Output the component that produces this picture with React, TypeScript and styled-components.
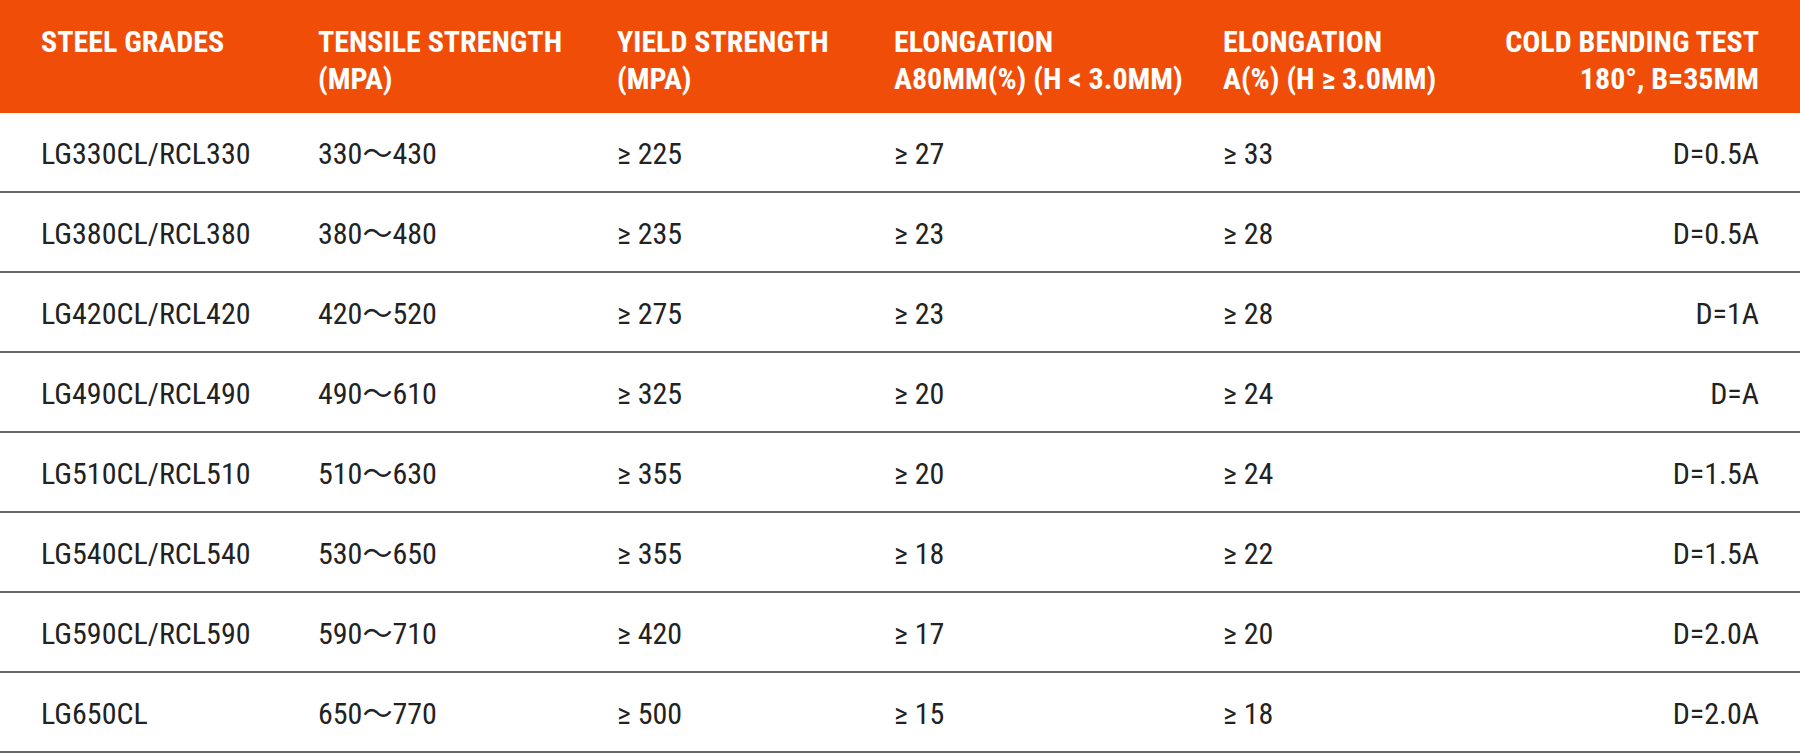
import React from 'react'
import styled, { createGlobalStyle } from 'styled-components'

interface GradeRow {
  grade: string
  tensile: string
  yieldStrength: string
  elongThin: string
  elongThick: string
  bending: string
}

const rows: GradeRow[] = [
  { grade: 'LG330CL/RCL330', tensile: '330～430', yieldStrength: '≥ 225', elongThin: '≥ 27', elongThick: '≥ 33', bending: 'D=0.5A' },
  { grade: 'LG380CL/RCL380', tensile: '380～480', yieldStrength: '≥ 235', elongThin: '≥ 23', elongThick: '≥ 28', bending: 'D=0.5A' },
  { grade: 'LG420CL/RCL420', tensile: '420～520', yieldStrength: '≥ 275', elongThin: '≥ 23', elongThick: '≥ 28', bending: 'D=1A' },
  { grade: 'LG490CL/RCL490', tensile: '490～610', yieldStrength: '≥ 325', elongThin: '≥ 20', elongThick: '≥ 24', bending: 'D=A' },
  { grade: 'LG510CL/RCL510', tensile: '510～630', yieldStrength: '≥ 355', elongThin: '≥ 20', elongThick: '≥ 24', bending: 'D=1.5A' },
  { grade: 'LG540CL/RCL540', tensile: '530～650', yieldStrength: '≥ 355', elongThin: '≥ 18', elongThick: '≥ 22', bending: 'D=1.5A' },
  { grade: 'LG590CL/RCL590', tensile: '590～710', yieldStrength: '≥ 420', elongThin: '≥ 17', elongThick: '≥ 20', bending: 'D=2.0A' },
  { grade: 'LG650CL', tensile: '650～770', yieldStrength: '≥ 500', elongThin: '≥ 15', elongThick: '≥ 18', bending: 'D=2.0A' },
]

const GlobalStyle = createGlobalStyle`
  body {
    margin: 0;
    background: #ffffff;
    font-family: "Roboto Condensed", Roboto, "Noto Sans CJK SC", sans-serif;
    font-stretch: condensed;
  }
`

const App: React.FC = () => {
  return (
    <>
      <GlobalStyle />
      <StyledTable>
        <StyledHead>
          <StyledHeadCell>STEEL GRADES</StyledHeadCell>
          <StyledHeadCell>TENSILE STRENGTH<br />(MPA)</StyledHeadCell>
          <StyledHeadCell>YIELD STRENGTH<br />(MPA)</StyledHeadCell>
          <StyledHeadCell>ELONGATION<br />A80MM(%) (H &lt; 3.0MM)</StyledHeadCell>
          <StyledHeadCell>ELONGATION<br />A(%) (H ≥ 3.0MM)</StyledHeadCell>
          <StyledHeadCell alignRight>COLD BENDING TEST<br />180°, B=35MM</StyledHeadCell>
        </StyledHead>
        {rows.map((row) => (
          <StyledRow key={row.grade}>
            <StyledCell>{row.grade}</StyledCell>
            <StyledCell>{row.tensile}</StyledCell>
            <StyledCell>{row.yieldStrength}</StyledCell>
            <StyledCell>{row.elongThin}</StyledCell>
            <StyledCell>{row.elongThick}</StyledCell>
            <StyledCell alignRight>{row.bending}</StyledCell>
          </StyledRow>
        ))}
      </StyledTable>
    </>
  )
}

const columns = '277px 299px 277px 329px 1fr 1fr'

const StyledTable = styled.div`
  width: 1800px;
`

const StyledHead = styled.div`
  display: grid;
  grid-template-columns: ${columns};
  align-items: start;
  height: 113px;
  box-sizing: border-box;
  padding: 23px 41px 0;
  background: #f04e08;
`

const StyledHeadCell = styled.div<{ alignRight?: boolean }>`
  font-size: 30px;
  font-weight: 700;
  line-height: 37px;
  color: #ffffff;
  text-transform: uppercase;
  white-space: nowrap;
  text-align: ${(p) => (p.alignRight ? 'right' : 'left')};
`

const StyledRow = styled.div`
  display: grid;
  grid-template-columns: ${columns};
  align-items: center;
  height: 80px;
  box-sizing: border-box;
  padding: 4px 41px 0;
  border-bottom: 2px solid #666666;
`

const StyledCell = styled.div<{ alignRight?: boolean }>`
  font-size: 30px;
  font-weight: 400;
  line-height: 36px;
  color: #222222;
  white-space: nowrap;
  text-align: ${(p) => (p.alignRight ? 'right' : 'left')};
`

export default App
